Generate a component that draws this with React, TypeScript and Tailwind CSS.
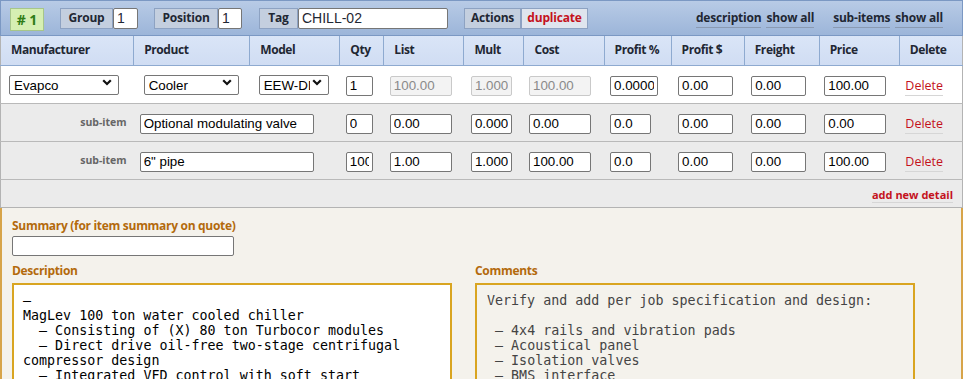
import type { ReactNode } from "react";

type Cell = { value: string; w: string; pl: string; disabled?: boolean };

const headers = [
  "Manufacturer",
  "Product",
  "Model",
  "Qty",
  "List",
  "Mult",
  "Cost",
  "Profit %",
  "Profit $",
  "Freight",
  "Price",
  "Delete",
];

const colWidths = [
  "w-[133px]",
  "w-[116px]",
  "w-[90px]",
  "w-[44px]",
  "w-[80px]",
  "w-[60px]",
  "w-[80px]",
  "w-[67px]",
  "w-[73px]",
  "w-[75px]",
  "w-[80px]",
  "w-[63px]",
];

const inputBase =
  "h-[20px] rounded-[2px] border px-[3px] font-['Liberation_Sans',Arial,sans-serif] text-[13.33px] outline-none";

const subItems = [
  {
    name: "Optional modulating valve",
    qty: "0",
    list: "0.00",
    mult: "0.000",
    cost: "0.00",
    pct: "0.0",
    profit: "0.00",
    freight: "0.00",
    price: "0.00",
  },
  {
    name: '6" pipe',
    qty: "100",
    list: "1.00",
    mult: "1.000",
    cost: "100.00",
    pct: "0.0",
    profit: "0.00",
    freight: "0.00",
    price: "100.00",
  },
];

const description = `–
MagLev 100 ton water cooled chiller
  – Consisting of (X) 80 ton Turbocor modules
  – Direct drive oil-free two-stage centrifugal
compressor design
  – Integrated VFD control with soft start
  – Onboard diagnostics and BACnet interface`;

const comments = `Verify and add per job specification and design:

 – 4x4 rails and vibration pads
 – Acoustical panel
 – Isolation valves
 – BMS interface
 – Startup and commissioning`;

function Field({ value, w, disabled }: { value: string; w: string; disabled?: boolean }) {
  return (
    <input
      readOnly
      value={value}
      disabled={disabled}
      className={
        inputBase +
        " " +
        w +
        (disabled
          ? " border-[#c9c9c9] bg-[#f3f3f3] text-[#8a8a8a]"
          : " border-[#767676] bg-white text-black")
      }
    />
  );
}

function Select({ value, w }: { value: string; w: string }) {
  return (
    <div className={"relative " + w}>
      <select
        defaultValue={value}
        className={
          inputBase +
          " w-full appearance-none border-[#767676] bg-white pr-[18px] pl-[4px] text-black"
        }
      >
        <option>{value}</option>
      </select>
      <svg
        className="pointer-events-none absolute right-[7px] top-[7px]"
        width="10"
        height="7"
        viewBox="0 0 10 7"
      >
        <path d="M1.2 1.2 L5 5 L8.8 1.2" fill="none" stroke="#111" strokeWidth="2.2" />
      </svg>
    </div>
  );
}

function TopLabel({ children, w, red }: { children: ReactNode; w: string; red?: boolean }) {
  return (
    <span
      className={
        "flex h-[21px] items-center justify-center border border-[#8da2c2] text-[12px] font-bold tracking-[-0.2px] " +
        w +
        (red ? " bg-[#dfe5ee] text-[#c4121c]" : " bg-[#c4cfdf] text-[#1f2733]")
      }
    >
      {children}
    </span>
  );
}

function DeleteLink() {
  return (
    <a className="border-b border-[#d6d6d6] pb-[1px] text-[12.5px] font-medium text-[#c4121c]">Delete</a>
  );
}

export default function App() {
  const row1: Cell[] = [
    { value: "1", w: "w-[27px]", pl: "pl-[6px]" },
    { value: "100.00", w: "w-[62px]", pl: "pl-[6px]", disabled: true },
    { value: "1.000", w: "w-[41px]", pl: "pl-[7px]", disabled: true },
    { value: "100.00", w: "w-[62px]", pl: "pl-[5px]", disabled: true },
    { value: "0.0000", w: "w-[48px]", pl: "pl-[6px]" },
    { value: "0.00", w: "w-[55px]", pl: "pl-[7px]" },
    { value: "0.00", w: "w-[55px]", pl: "pl-[7px]" },
    { value: "100.00", w: "w-[62px]", pl: "pl-[5px]" },
  ];

  return (
    <div className="w-[963px] bg-white font-['Open_Sans',sans-serif] text-[#1f2733]">
      {/* item toolbar */}
      <div className="flex h-[36px] items-center border border-[#7b98c3] bg-gradient-to-b from-[#b8cbe6] to-[#9cb5d9] pl-[9px] pr-[19px]">
        <span className="mt-[2px] flex h-[23px] w-[34px] items-center justify-center border border-[#a7c68a] bg-[#d6efb3] text-[14px] font-bold text-[#2f7d16]">
          # 1
        </span>
        <div className="ml-[16px] flex items-center">
          <TopLabel w="w-[53px]">Group</TopLabel>
          <input readOnly value="1" className={inputBase + " h-[21px] w-[25px] border-[#767676] bg-white text-[14px]"} />
        </div>
        <div className="ml-[16px] flex items-center">
          <TopLabel w="w-[64px]">Position</TopLabel>
          <input readOnly value="1" className={inputBase + " h-[21px] w-[24px] border-[#767676] bg-white text-[14px]"} />
        </div>
        <div className="ml-[17px] flex items-center">
          <TopLabel w="w-[39px]">Tag</TopLabel>
          <input readOnly value="CHILL-02" className={inputBase + " h-[21px] w-[150px] border-[#767676] bg-white text-[14px]"} />
        </div>
        <div className="ml-[16px] flex items-center">
          <TopLabel w="w-[57px]">Actions</TopLabel>
          <TopLabel w="w-[67px]" red>
            duplicate
          </TopLabel>
        </div>
        <div className="ml-auto flex items-center gap-[19px] text-[12px] font-bold tracking-[-0.2px] text-[#1f2733]">
          <span className="flex gap-[5px]">
            <a className="border-b border-[#8a9ab2]">description</a>
            <a className="border-b border-[#8a9ab2]">show all</a>
          </span>
          <span className="flex gap-[5px]">
            <a className="border-b border-[#8a9ab2]">sub-items</a>
            <a className="border-b border-[#8a9ab2]">show all</a>
          </span>
        </div>
      </div>

      <table className="w-full table-fixed border-collapse border-x border-[#b3b3b3]">
        <colgroup>
          {colWidths.map((w, i) => (
            <col key={i} className={w} />
          ))}
        </colgroup>
        <thead>
          <tr className="h-[29px] bg-gradient-to-b from-[#dae5f7] to-[#d0ddf3]">
            {headers.map((h, i) => (
              <th
                key={h}
                className={
                  "border-b border-[#8eaad0] pl-[10px] text-left text-[12px] font-bold tracking-[-0.4px] text-[#1f2733]" +
                  (i > 0 ? " border-l" : "")
                }
              >
                {h}
              </th>
            ))}
          </tr>
        </thead>
        <tbody>
          <tr className="h-[38px] border-b border-[#b9b9b9] bg-white">
            <td className="pl-[8px]">
              <Select value="Evapco" w="w-[110px]" />
            </td>
            <td className="pl-[10px]">
              <Select value="Cooler" w="w-[95px]" />
            </td>
            <td className="pl-[9px]">
              <Select value="EEW-DD100" w="w-[70px]" />
            </td>
            {row1.map((c, i) => (
              <td key={i} className={c.pl}>
                <Field value={c.value} w={c.w} disabled={c.disabled} />
              </td>
            ))}
            <td className="pl-[6px]">
              <DeleteLink />
            </td>
          </tr>
          {subItems.map((s) => (
            <tr key={s.name} className="h-[38px] border-b border-[#b9b9b9] bg-[#ebebeb]">
              <td className="pt-[2px] pr-[7px] text-right text-[10.5px] font-bold text-[#666]">sub-item</td>
              <td colSpan={2} className="pl-[6px]">
                <Field value={s.name} w="w-[174px]" />
              </td>
              <td className="pl-[6px]">
                <Field value={s.qty} w="w-[27px]" />
              </td>
              <td className="pl-[6px]">
                <Field value={s.list} w="w-[62px]" />
              </td>
              <td className="pl-[7px]">
                <Field value={s.mult} w="w-[41px]" />
              </td>
              <td className="pl-[5px]">
                <Field value={s.cost} w="w-[62px]" />
              </td>
              <td className="pl-[6px]">
                <Field value={s.pct} w="w-[41px]" />
              </td>
              <td className="pl-[7px]">
                <Field value={s.profit} w="w-[55px]" />
              </td>
              <td className="pl-[7px]">
                <Field value={s.freight} w="w-[55px]" />
              </td>
              <td className="pl-[5px]">
                <Field value={s.price} w="w-[62px]" />
              </td>
              <td className="pl-[6px]">
                <DeleteLink />
              </td>
            </tr>
          ))}
          <tr className="h-[28px] border-b border-[#b3b3b3] bg-[#ebebeb]">
            <td colSpan={12} className="pr-[9px] text-right">
              <a className="border-b border-[#d6d6d6] text-[11px] font-bold text-[#c4121c]">add new detail</a>
            </td>
          </tr>
        </tbody>
      </table>

      {/* detail text area */}
      <div className="border-x-2 border-[#d7a449] bg-[#f4f2ec] px-[10px] pt-[10px] pb-[12px]">
        <div className="text-[12px] font-bold leading-[16px] tracking-[-0.3px] text-[#b36a0c]">
          Summary (for item summary on quote)
        </div>
        <input
          readOnly
          value=""
          className={inputBase + " mt-[2px] block h-[19px] w-[222px] border-[#767676] bg-white"}
        />
        <div className="mt-[7px] grid grid-cols-[440px_440px] gap-x-[23px]">
          <div>
            <div className="text-[12px] font-bold leading-[16px] tracking-[-0.3px] text-[#b36a0c]">Description</div>
            <div className="mt-[4px] min-h-[140px] whitespace-pre-wrap border-2 border-[#d9a521] bg-white px-[9px] pt-[8px] pb-[8px] font-['DejaVu_Sans_Mono',monospace] text-[13.33px] leading-[15px] text-black">
              {description}
            </div>
          </div>
          <div>
            <div className="text-[12px] font-bold leading-[16px] tracking-[-0.3px] text-[#b36a0c]">Comments</div>
            <div className="mt-[4px] min-h-[140px] whitespace-pre-wrap border-2 border-[#d9a521] bg-[#f4f2ec] px-[10px] pt-[8px] pb-[8px] font-['DejaVu_Sans_Mono',monospace] text-[13.33px] leading-[15px] text-[#444]">
              {comments}
            </div>
          </div>
        </div>
      </div>
    </div>
  );
}
